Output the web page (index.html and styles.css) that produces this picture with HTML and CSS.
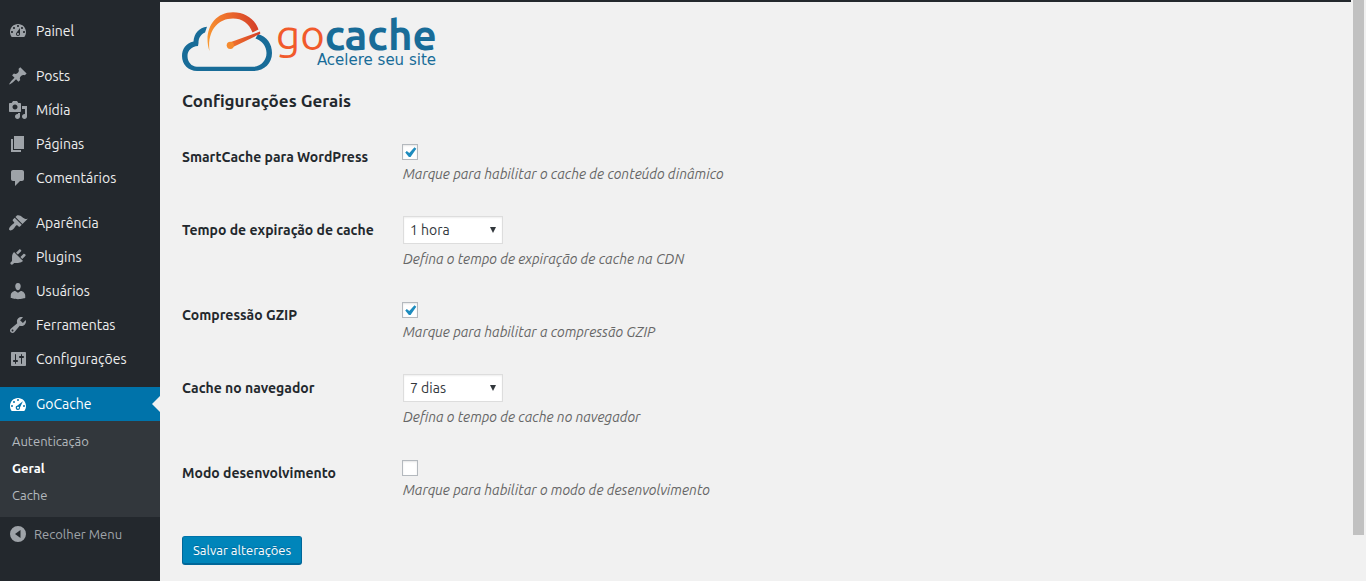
FILE: index.html
```html
<!DOCTYPE html>
<html lang="pt-BR">
<head>
<meta charset="utf-8">
<title>GoCache - Configurações Gerais</title>
<link rel="stylesheet" href="styles.css">
</head>
<body>
<div class="admin">
  <nav class="sidebar" aria-label="Menu principal">
    <ul class="menu">
      <li><a class="item" href="#"><svg class="icon" viewBox="0 0 20 20"><path fill-rule="evenodd" d="M3.76 16h12.48c1.1-1.37 1.76-3.11 1.76-5 0-4.42-3.58-8-8-8s-8 3.58-8 8c0 1.89.66 3.63 1.76 5zM10 4c.55 0 1 .45 1 1s-.45 1-1 1-1-.45-1-1 .45-1 1-1zM6 6c.55 0 1 .45 1 1s-.45 1-1 1-1-.45-1-1 .45-1 1-1zm8 0c.55 0 1 .45 1 1s-.45 1-1 1-1-.45-1-1 .45-1 1-1zm-5.37 5.55L12 7v6c0 1.1-.9 2-2 2s-2-.9-2-2c0-.57.24-1.08.63-1.45zM4 10c.55 0 1 .45 1 1s-.45 1-1 1-1-.45-1-1 .45-1 1-1zm12 0c.55 0 1 .45 1 1s-.45 1-1 1-1-.45-1-1 .45-1 1-1zm-5 3c0-.55-.45-1-1-1s-1 .45-1 1 .45 1 1 1 1-.45 1-1z"/></svg>Painel</a></li>
    </ul>
    <ul class="menu">
      <li><a class="item" href="#"><svg class="icon" viewBox="0 0 20 20"><path d="M10.44 3.02l1.82-1.82 6.36 6.35-1.83 1.82c-1.05-.68-2.48-.57-3.41.36l-.75.75c-.92.93-1.04 2.35-.35 3.41l-1.83 1.82-2.41-2.41-2.8 2.79c-.42.42-3.38 2.71-3.8 2.29s1.86-3.39 2.28-3.81l2.79-2.79L4.1 9.36l1.83-1.82c1.05.69 2.48.57 3.4-.36l.75-.75c.93-.92 1.05-2.35.36-3.41z"/></svg>Posts</a></li>
      <li><a class="item" href="#"><svg class="icon" viewBox="0 0 20 20"><path fill-rule="evenodd" d="M13 11V4c0-.55-.45-1-1-1h-1.67L9 1H5L3.67 3H2c-.55 0-1 .45-1 1v7c0 .55.45 1 1 1h10c.55 0 1-.45 1-1zM7 4.5c1.38 0 2.5 1.12 2.5 2.5S8.38 9.5 7 9.5 4.5 8.38 4.5 7 5.62 4.5 7 4.5zM14 6h5v10.5c0 1.38-1.12 2.5-2.5 2.5S14 17.88 14 16.5s1.12-2.5 2.5-2.5c.17 0 .34.02.5.05V9h-3V6zm-4 8.05V13h2v3.5c0 1.38-1.12 2.5-2.5 2.5S7 17.88 7 16.5 8.12 14 9.5 14c.17 0 .34.02.5.05z"/></svg>Mídia</a></li>
      <li><a class="item" href="#"><svg class="icon" viewBox="0 0 20 20"><path d="M6 15V2h10v13H6zm-1 1h8v2H3V5h2v11z"/></svg>Páginas</a></li>
      <li><a class="item" href="#"><svg class="icon" viewBox="0 0 20 20"><path d="M5 2h9c1.1 0 2 .9 2 2v7c0 1.1-.9 2-2 2h-2l-5 5v-5H5c-1.1 0-2-.9-2-2V4c0-1.1.9-2 2-2z"/></svg>Comentários</a></li>
    </ul>
    <ul class="menu">
      <li><a class="item" href="#"><svg class="icon" viewBox="0 0 20 20"><path d="M14.48 11.06L7.41 3.99l1.5-1.5c.5-.56 2.3-.47 3.51.32 1.21.8 1.43 1.28 2.91 2.1 1.18.64 2.45 1.26 4.45.85zm-.71.71L6.7 4.7 4.93 6.47c-.39.39-.39 1.02 0 1.41l1.06 1.06c.39.39.39 1.03 0 1.42-.6.6-1.43 1.11-2.21 1.69-.35.26-.7.53-1.01.84C1.43 14.23.4 16.08 1.4 17.07c.99 1 2.84-.03 4.18-1.36.31-.31.58-.66.85-1.02.57-.78 1.08-1.61 1.69-2.21.39-.39 1.02-.39 1.41 0l1.06 1.06c.39.39 1.02.39 1.41 0z"/></svg>Aparência</a></li>
      <li><a class="item" href="#"><svg class="icon" viewBox="0 0 20 20"><path d="M13.11 4.36L9.87 7.6 8 5.73l3.24-3.24c.35-.34 1.05-.2 1.56.32.52.51.66 1.21.31 1.55zm-8 1.77l.91-1.12 9.01 9.01-1.19.84c-.71.71-2.63 1.16-3.82 1.16H6.14L4.9 17.26c-.59.59-1.54.59-2.12 0-.59-.58-.59-1.53 0-2.12l1.24-1.24v-3.88c0-1.13.4-3.19 1.09-3.89zm7.26 3.97l3.24-3.24c.34-.35 1.04-.21 1.55.31.52.51.66 1.21.31 1.55l-3.24 3.25z"/></svg>Plugins</a></li>
      <li><a class="item" href="#"><svg class="icon" viewBox="0 0 20 20"><path d="M10 9.25c-2.27 0-2.73-3.44-2.73-3.44C7 4.02 7.82 2 9.97 2c2.16 0 2.98 2.02 2.71 3.81 0 0-.41 3.44-2.68 3.44zm0 2.57L12.72 10c2.39 0 4.52 2.33 4.52 4.53v2.49s-3.65 1.13-7.24 1.13c-3.65 0-7.24-1.13-7.24-1.13v-2.49c0-2.25 1.94-4.48 4.47-4.48z"/></svg>Usuários</a></li>
      <li><a class="item" href="#"><svg class="icon" viewBox="0 0 20 20"><path fill-rule="evenodd" d="M16.68 9.77c-1.34 1.34-3.3 1.67-4.95.99l-5.41 6.52c-.99.99-2.59.99-3.58 0s-.99-2.59 0-3.57l6.52-5.42c-.68-1.65-.35-3.61.99-4.95 1.28-1.28 3.12-1.62 4.72-1.06l-2.89 2.89 2.82 2.82 2.86-2.87c.53 1.58.18 3.39-1.08 4.65zM3.81 16.21c.4.39 1.04.39 1.43 0 .4-.4.4-1.04 0-1.43-.39-.4-1.03-.4-1.43 0-.39.39-.39 1.03 0 1.43z"/></svg>Ferramentas</a></li>
      <li><a class="item" href="#"><svg class="icon" viewBox="0 0 20 20"><path fill-rule="evenodd" d="M18 16V4c0-.55-.45-1-1-1H4c-.55 0-1 .45-1 1v12c0 .55.45 1 1 1h13c.55 0 1-.45 1-1zM8 11h1c.55 0 1 .45 1 1s-.45 1-1 1H8v1.5c0 .28-.22.5-.5.5s-.5-.22-.5-.5V13H6c-.55 0-1-.45-1-1s.45-1 1-1h1V5.5c0-.28.22-.5.5-.5s.5.22.5.5V11zm5-2h-1c-.55 0-1-.45-1-1s.45-1 1-1h1V5.5c0-.28.22-.5.5-.5s.5.22.5.5V7h1c.55 0 1 .45 1 1s-.45 1-1 1h-1v5.5c0 .28-.22.5-.5.5s-.5-.22-.5-.5V9z"/></svg>Configurações</a></li>
    </ul>
    <ul class="menu menu-current">
      <li><a class="item current" href="#"><svg class="icon" viewBox="0 0 20 20"><path fill-rule="evenodd" d="M3.76 17h12.48C17.34 15.63 18 13.9 18 12c0-4.41-3.58-8-8-8s-8 3.59-8 8c0 1.9.66 3.63 1.76 5zM9 6a1 1 0 1 1 2 0a1 1 0 1 1-2 0zM5 8a1 1 0 1 1 2 0a1 1 0 1 1-2 0zM3 12a1 1 0 1 1 2 0a1 1 0 1 1-2 0zM15 12a1 1 0 1 1 2 0a1 1 0 1 1-2 0zM14.9 7.2L12 13.4a2.2 2.2 0 1 1-2.5-1.8zM9 13.8a1 1 0 1 0 2 0a1 1 0 1 0-2 0z"/></svg>GoCache</a>
        <ul class="submenu">
          <li><a href="#">Autenticação</a></li>
          <li><a class="active" href="#" aria-current="page">Geral</a></li>
          <li><a href="#">Cache</a></li>
        </ul>
      </li>
    </ul>
    <button class="collapse" type="button"><svg class="icon" viewBox="0 0 20 20"><path fill-rule="evenodd" d="M10 2a8 8 0 1 0 0 16a8 8 0 1 0 0-16zM12.5 6v8L7 10z"/></svg>Recolher Menu</button>
  </nav>
  <main class="content">
    <svg class="logo" viewBox="0 0 256 64" role="img" aria-label="GoCache - Acelere seu site">
      <defs>
        <linearGradient id="heat" gradientUnits="userSpaceOnUse" x1="25" y1="30" x2="77" y2="16">
          <stop offset="0" stop-color="#f9982f"/><stop offset=".5" stop-color="#ec6b2c"/><stop offset="1" stop-color="#d33d28"/>
        </linearGradient>
      </defs>
      <path fill="#186c98" d="M25 16.700C17 17.500 12 23.500 11.500 31.500C4 33 0 39 0 46C0 54.500 6.500 61 15 61H71C82 61 90 53.500 90 43C90 34 85 26.500 76 24L73.500 28.500C80 31 84.500 36 84.500 43C84.500 50.500 79 56.700 71 56.700H15C9.500 56.700 5.500 52 5.500 46C5.500 40.500 9.500 36.500 16 36L16.500 33C16.500 28 18.500 24.500 23 22.500Z"/>
      <path fill="url(#heat)" d="M27.5 41C21 22 31 2.3 51 2.3C63 2.3 73 9 76.500 19.500L70.500 22.500C67 13 60 8.500 51 8.500C35 8.500 25 22 27.5 41Z"/>
      <path fill="url(#heat)" d="M47.5 32.5L78 21.6L78.3 23.8L50 37.5Z"/>
      <circle cx="48.3" cy="35.3" r="3.6" fill="#f58a2e"/>
      <text class="logo-name" x="94" y="40"><tspan class="logo-go">go</tspan><tspan class="logo-cache">cache</tspan></text>
      <text class="logo-tagline" x="254" y="55" text-anchor="end">Acelere seu site</text>
    </svg>
    <form class="settings">
      <h2>Configurações Gerais</h2>
      <div class="row">
        <label class="row-label" for="smartcache">SmartCache para WordPress</label>
        <div class="field"><input type="checkbox" id="smartcache" checked><p>Marque para habilitar o cache de conteúdo dinâmico</p></div>
      </div>
      <div class="row">
        <label class="row-label" for="expiration">Tempo de expiração de cache</label>
        <div class="field"><span class="select"><select id="expiration"><option>1 hora</option></select></span><p>Defina o tempo de expiração de cache na CDN</p></div>
      </div>
      <div class="row">
        <label class="row-label" for="gzip">Compressão GZIP</label>
        <div class="field"><input type="checkbox" id="gzip" checked><p>Marque para habilitar a compressão GZIP</p></div>
      </div>
      <div class="row">
        <label class="row-label" for="browser">Cache no navegador</label>
        <div class="field"><span class="select"><select id="browser"><option>7 dias</option></select></span><p>Defina o tempo de cache no navegador</p></div>
      </div>
      <div class="row">
        <label class="row-label" for="devmode">Modo desenvolvimento</label>
        <div class="field"><input type="checkbox" id="devmode"><p>Marque para habilitar o modo de desenvolvimento</p></div>
      </div>
      <button class="save" type="submit">Salvar alterações</button>
    </form>
  </main>
  <div class="scrollbar" aria-hidden="true"><div class="thumb"></div></div>
</div>
</body>
</html>
```
FILE: styles.css
```css
* { box-sizing: border-box; }

body {
  margin: 0;
  background: #f1f1f1;
  color: #23282d;
  font: 14px/20px Ubuntu, "Noto Sans", sans-serif;
}

ul { margin: 0; padding: 0; list-style: none; }
a { text-decoration: none; }

.admin { display: flex; min-height: 100vh; }

.sidebar {
  flex: 0 0 160px;
  padding-top: 14px;
  background: #23282d;
}
.menu { margin-bottom: 11px; }
.menu-current { margin-bottom: 0; }
.item {
  display: flex;
  align-items: center;
  gap: 8px;
  height: 34px;
  padding-left: 8px;
  color: #eee;
}
.icon { flex: none; width: 20px; height: 20px; fill: #9ea3a8; }
.current { position: relative; background: #0073aa; color: #fff; }
.current .icon { fill: #fff; }
.current::after {
  content: "";
  position: absolute;
  top: 9px;
  right: 0;
  border: 8px solid transparent;
  border-right-color: #f1f1f1;
  border-left-width: 0;
}
.submenu { padding: 7px 0 8px; background: #32373c; }
.submenu a {
  display: block;
  padding-left: 12px;
  color: #b4b9be;
  font-size: 13px;
  line-height: 27px;
}
.submenu .active { color: #fff; font-weight: 700; }
.collapse {
  display: flex;
  align-items: center;
  gap: 6px;
  width: 100%;
  height: 34px;
  padding: 0 0 0 8px;
  border: 0;
  background: none;
  color: #a0a5aa;
  font: inherit;
  font-size: 13px;
}

.content {
  flex: 1;
  padding: 8px 0 16px 22px;
  border-top: 2px solid #23282d;
}
.logo { display: block; width: 256px; height: 64px; overflow: visible; }
.logo-name { font: 42px Ubuntu, Lato, sans-serif; }
.logo-go { fill: #f15a2b; }
.logo-cache { fill: #186c98; font-weight: 700; }
.logo-tagline { fill: #186c98; font: 15px "DejaVu Sans", sans-serif; }

h2 {
  margin: 15px 0 24px;
  font-size: 17px;
  font-weight: 700;
  line-height: 24px;
}
.row { display: grid; grid-template-columns: 220px 1fr; }
.row-label { padding-top: 10px; font-weight: 700; }
.field { padding: 6px 0 25px; }
.field p {
  margin: 0 0 0 1px;
  color: #666;
  font-style: italic;
  line-height: 22px;
}

input[type="checkbox"] {
  appearance: none;
  display: block;
  width: 16px;
  height: 16px;
  margin: 1px 0 3px;
  border: 1px solid #b4b9be;
  background: #fff;
  box-shadow: inset 0 1px 2px rgba(0, 0, 0, .1);
}
input[type="checkbox"]:checked::before {
  content: "";
  display: block;
  width: 14px;
  height: 14px;
  background: #1e8cbe;
  clip-path: polygon(16% 53%, 27% 42%, 45% 58%, 82% 16%, 95% 26%, 54% 86%, 42% 86%);
}

.select {
  display: block;
  position: relative;
  width: 100px;
  margin: 0 0 4px 1px;
}
.select::after {
  content: "";
  position: absolute;
  top: 11px;
  right: 7px;
  border: 3px solid transparent;
  border-top: 6px solid #32373c;
  border-bottom-width: 0;
  pointer-events: none;
}
select {
  appearance: none;
  display: block;
  width: 100%;
  height: 28px;
  padding: 0 6px;
  border: 1px solid #ddd;
  border-radius: 0;
  background: #fff;
  box-shadow: inset 0 1px 2px rgba(0, 0, 0, .07);
  color: #32373c;
  font: inherit;
}

.save {
  display: block;
  height: 29px;
  margin-top: 10px;
  padding: 0 10px;
  border: 1px solid #006799;
  border-top-color: #0073aa;
  border-bottom-width: 2px;
  border-radius: 3px;
  background: #0085ba;
  color: #fff;
  font: inherit;
  font-size: 13px;
  text-shadow: 0 -1px 1px #006799;
}

.scrollbar { flex: 0 0 15px; padding: 0 2px; }
.thumb { height: 92vh; background: #c1c1c1; }
```
